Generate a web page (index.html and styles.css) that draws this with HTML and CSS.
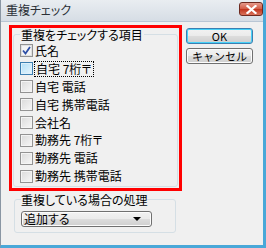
FILE: index.html
```html
<!DOCTYPE html>
<html>
<head>
    <meta charset="UTF-8">
    <title>重複チェック</title>
    <link rel="stylesheet" href="styles.css">
</head>
<body>
    <div class="window">
        <div class="titlebar">
            <span class="title">重複チェック</span>
            <span class="close">
                <svg width="11" height="9" viewBox="0 0 11 9"><path d="M1.5 1 L9.5 8 M9.5 1 L1.5 8" stroke="#fff" stroke-width="2.2" stroke-linecap="square"/></svg>
            </span>
        </div>
        <div class="client">
            <div class="top">
                <div class="mark">
                    <fieldset class="group">
                        <legend>重複をチェックする項目</legend>
                        <div class="rows">
                            <label class="check"><span class="box checked"><svg width="9" height="9" viewBox="0 0 9 9"><path d="M1 4.5 L3.5 7.5 L8 1" fill="none" stroke="#2c4ea6" stroke-width="1.8"/></svg></span>氏名</label>
                            <label class="check"><span class="box hot"></span><span class="focus">自宅 7桁〒</span></label>
                            <label class="check"><span class="box"></span>自宅 電話</label>
                            <label class="check"><span class="box"></span>自宅 携帯電話</label>
                            <label class="check"><span class="box"></span>会社名</label>
                            <label class="check"><span class="box"></span>勤務先 7桁〒</label>
                            <label class="check"><span class="box"></span>勤務先 電話</label>
                            <label class="check"><span class="box"></span>勤務先 携帯電話</label>
                        </div>
                    </fieldset>
                </div>
                <div class="buttons">
                    <button class="btn default">OK</button>
                    <button class="btn">キャンセル</button>
                </div>
            </div>
            <fieldset class="group lower">
                <legend>重複している場合の処理</legend>
                <div class="select">追加する<span class="arrow"></span></div>
            </fieldset>
        </div>
    </div>
</body>
</html>
```

FILE: styles.css
```css
body {
    margin: 0;
    padding: 0;
    font-family: "Noto Sans CJK JP", "Liberation Sans", sans-serif;
    font-size: 12px;
    font-feature-settings: "palt";
    color: #000;
}
.window {
    width: 266px;
    height: 248px;
    box-sizing: border-box;
    background: #f0f0f0;
    border-left: 1px solid #8a96a3;
    border-right: 3px solid #4aa8d8;
    border-bottom: 3px solid #4aa8d8;
    display: flex;
    flex-direction: column;
}
.titlebar {
    height: 22px;
    flex: none;
    display: flex;
    align-items: center;
    justify-content: space-between;
    padding: 0 0 0 5px;
    background: linear-gradient(to bottom, #e9edf1, #d6dde5);
    border-bottom: 1px solid #b9c6d4;
    box-sizing: border-box;
}
.title {
    line-height: 14px;
    color: #2a2f36;
    padding-bottom: 2px;
}
.close {
    width: 24px;
    height: 14px;
    box-sizing: border-box;
    margin: 0 0 3px 0;
    border: 1px solid #6e2a20;
    border-radius: 3px;
    background: linear-gradient(to bottom, #e59a8c, #d25a44 50%, #c0331c 51%, #d9735c);
    display: flex;
    align-items: center;
    justify-content: center;
}
.close svg {
    display: block;
}
.client {
    flex: 1;
    padding: 3px 0 0 8px;
}
.top {
    display: flex;
    gap: 4px;
}
.mark {
    width: 167px;
    border: 3px solid #ff0000;
}
.group {
    margin: 0 1px 1px 1px;
    padding: 0 0 1px 6px;
    border: 1px solid #d5dfe5;
    border-radius: 3px;
    min-width: 0;
}
.group legend {
    padding: 0 1px;
    line-height: 13px;
}
.rows {
    display: flex;
    flex-direction: column;
    padding-top: 1px;
}
.check {
    height: 17.9px;
    display: flex;
    align-items: center;
    gap: 2px;
    line-height: 14px;
    white-space: nowrap;
}
.box {
    width: 13px;
    height: 13px;
    box-sizing: border-box;
    border: 1px solid #939393;
    background: linear-gradient(135deg, #dadada, #f7f7f7);
    box-shadow: inset 0 0 0 1px #f4f4f4;
    display: flex;
    align-items: center;
    justify-content: center;
    flex: none;
}
.box.checked {
    background: #f4f4f4;
    box-shadow: inset 0 0 0 1px #e0e0e0;
}
.box.hot {
    border-color: #3c7fb1;
    background: linear-gradient(135deg, #b1dff7, #e6f5fd);
    box-shadow: inset 0 0 0 1px #def0fb;
}
.focus {
    outline: 1px dotted #000;
    outline-offset: 0;
    padding: 0 1px;
}
.buttons {
    display: flex;
    flex-direction: column;
    gap: 4px;
    padding-top: 3px;
}
.btn {
    width: 67px;
    height: 16px;
    padding: 0;
    font-family: inherit;
    font-size: 11px;
    line-height: 14px;
    color: #000;
    border: 1px solid #707070;
    border-radius: 3px;
    background: linear-gradient(to bottom, #f2f2f2, #ebebeb 48%, #dddddd 50%, #cfcfcf);
    box-shadow: inset 0 0 0 1px #fcfcfc;
}
.btn.default {
    border-color: #3c7fb1;
    box-shadow: inset 0 0 0 1px #48d2f8;
}
.lower {
    width: 162px;
    box-sizing: border-box;
    margin: 2px 0 0 5px;
    padding: 5px 0 5px 6px;
}
.lower legend {
    padding: 0;
}
.select {
    width: 131px;
    height: 16px;
    box-sizing: border-box;
    border: 1px solid #707070;
    border-radius: 3px;
    background: linear-gradient(to bottom, #f2f2f2, #ebebeb 48%, #dddddd 50%, #cfcfcf);
    box-shadow: inset 0 0 0 1px #fcfcfc;
    display: flex;
    align-items: center;
    justify-content: space-between;
    padding: 0 10px 0 2px;
    line-height: 14px;
}
.arrow {
    width: 0;
    height: 0;
    border-left: 4px solid transparent;
    border-right: 4px solid transparent;
    border-top: 4px solid #000;
}
```
